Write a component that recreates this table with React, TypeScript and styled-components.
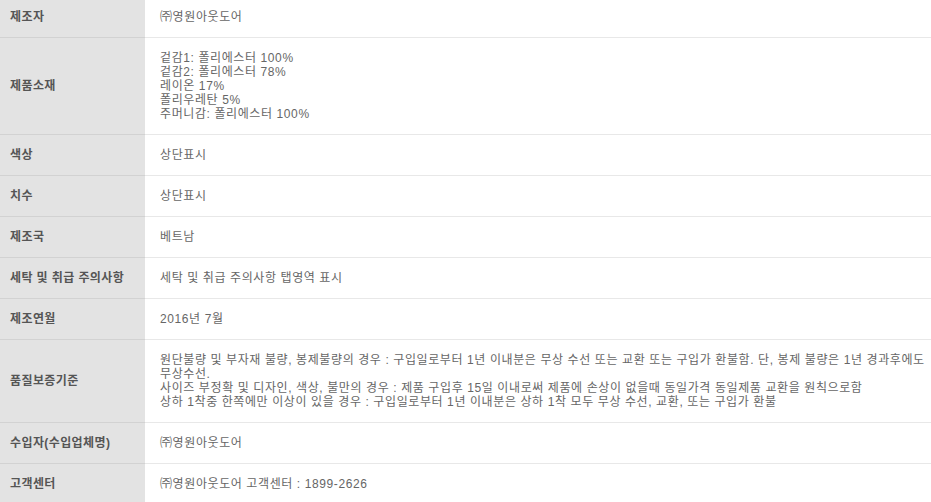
import React from "react";
import styled, {createGlobalStyle} from "styled-components";

interface InfoRow {
    label: string;
    lines: string[];
}

const rows: InfoRow[] = [
    {label: "제조자", lines: ["㈜영원아웃도어"]},
    {
        label: "제품소재",
        lines: [
            "겉감1: 폴리에스터 100%",
            "겉감2: 폴리에스터 78%",
            "레이온 17%",
            "폴리우레탄 5%",
            "주머니감: 폴리에스터 100%",
        ],
    },
    {label: "색상", lines: ["상단표시"]},
    {label: "치수", lines: ["상단표시"]},
    {label: "제조국", lines: ["베트남"]},
    {label: "세탁 및 취급 주의사항", lines: ["세탁 및 취급 주의사항 탭영역 표시"]},
    {label: "제조연월", lines: ["2016년 7월"]},
    {
        label: "품질보증기준",
        lines: [
            "원단불량 및 부자재 불량, 봉제불량의 경우 : 구입일로부터 1년 이내분은 무상 수선 또는 교환 또는 구입가 환불함. 단, 봉제 불량은 1년 경과후에도 무상수선.",
            "사이즈 부정확 및 디자인, 색상, 불만의 경우 : 제품 구입후 15일 이내로써 제품에 손상이 없을때 동일가격 동일제품 교환을 원칙으로함",
            "상하 1착중 한쪽에만 이상이 있을 경우 : 구입일로부터 1년 이내분은 상하 1착 모두 무상 수선, 교환, 또는 구입가 환불",
        ],
    },
    {label: "수입자(수입업체명)", lines: ["㈜영원아웃도어"]},
    {label: "고객센터", lines: ["㈜영원아웃도어 고객센터 : 1899-2626"]},
];

function App() {
    return (
        <>
            <GlobalStyle/>
            <InfoTable>
                <tbody>
                    {rows.map(r =>
                        <tr key={r.label}>
                            <LabelCell>{r.label}</LabelCell>
                            <ValueCell>
                                {r.lines.map((l, i) => <Line key={i}>{l}</Line>)}
                            </ValueCell>
                        </tr>)}
                </tbody>
            </InfoTable>
        </>
    );
}

/**
 * Styled Components
 */
const GlobalStyle = createGlobalStyle`
    body {
        margin: 0;
        background: #fff;
        font-family: "Liberation Sans", "Noto Sans CJK KR", sans-serif;
        overflow: hidden;
    }
`;

// the page is scrolled a few pixels, so the first row is cut at the top
const InfoTable = styled("table")`
    width: 931px;
    margin-top: -3px;
    border-collapse: collapse;
    table-layout: fixed;
    font-size: 12px;
    line-height: 14px;
`;

const LabelCell = styled("th")`
    width: 145px;
    box-sizing: border-box;
    padding: 13px 0 13px 10px;
    background-color: #e3e3e3;
    border-bottom: 1px solid #d2d2d2;
    color: #555;
    font-weight: bold;
    letter-spacing: 0.4px;
    text-align: left;
    vertical-align: middle;
    white-space: nowrap;
`;

const ValueCell = styled("td")`
    padding: 13px 0 13px 15px;
    border-bottom: 1px solid #e8e8e8;
    color: #666;
    letter-spacing: 0.6px;
    vertical-align: middle;
`;

const Line = styled("div")`
    word-break: keep-all;
`;

export default App;
